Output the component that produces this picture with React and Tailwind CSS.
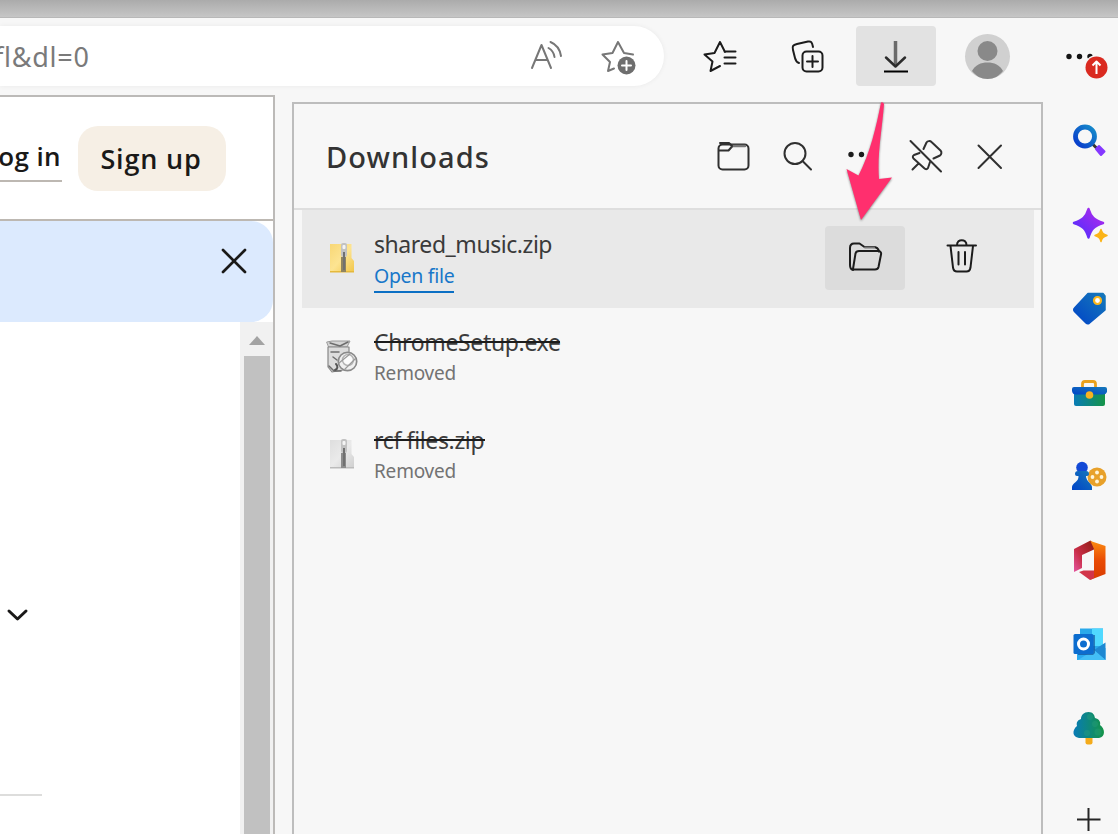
import React from "react";

function Glyph({ box, className = "", children }) {
  const [, , w, h] = box.split(" ");
  return (
    <svg
      width={w}
      height={h}
      viewBox={box}
      fill="none"
      stroke="currentColor"
      strokeWidth="2"
      strokeLinecap="round"
      strokeLinejoin="round"
      className={"block shrink-0 " + className}
    >
      {children}
    </svg>
  );
}

function Toolbar() {
  return (
    <header className="flex h-[77px] shrink-0 items-start pt-2">
      <div className="flex h-[60px] w-[664px] shrink-0 items-center rounded-r-full bg-white text-[#777] shadow-[0_0_5px_rgba(0,0,0,0.06)]">
        <span className="-ml-[6px] w-[534px] whitespace-nowrap pt-[2px] font-['Noto_Sans',sans-serif] text-[27px] leading-[60px] tracking-[0.75px] text-[#7a7a7a]">
          fl&amp;dl=0
        </span>
        <Glyph box="528 36 36 40">
          <path d="M532 68 541.5 45 551 68M535.5 60H547.5M548.500 48C552 50 554 53 554.500 57M550.500 42C556.500 44.500 560 49.500 561 56" />
        </Glyph>
        <Glyph box="600 36 38 40" className="ml-9">
          <path d="M633 54.500 624 53 618 42 612.500 53 602.500 54.500 610 62 608 71 614 68.500" />
          <circle cx="626.500" cy="65.500" r="9" fill="#6e6e6e" stroke="none" />
          <path d="M626.500 61V70M622 65.500H631" stroke="#fff" />
        </Glyph>
      </div>
      <Glyph box="700 36 40 40" className="ml-9 mt-[10px] text-[#1c1c1c]">
        <path d="M725 52 720 42 714.500 53 704.500 54.500 712.500 61.500 710.500 71 720 66M724.500 51.500H735.500M724.500 57.500H735.500M724.500 63.500H735.500" />
      </Glyph>
      <Glyph box="788 36 40 40" className="ml-12 mt-[10px] text-[#1c1c1c]">
        <path d="M799 63 C796 62 795.500 60 795 58L793 50C792 46 793 45 797 44L808 41.500C811 41 812 42 813 47" />
        <rect x="802.500" y="51.500" width="20" height="20" rx="4" />
        <path d="M812.500 56V67M807 61.500H818" />
      </Glyph>
      <button className="ml-7 flex h-[60px] w-20 shrink-0 items-center justify-center rounded bg-[#e2e2e2] text-black">
        <Glyph box="876 36 40 40">
          <path d="M895.500 41V65" stroke="#6b6b6b" strokeWidth="3.500" strokeLinecap="butt" />
          <path d="M886 57.500 895.500 66.500 905 57.500" stroke="#2c2c2c" strokeWidth="2.500" />
          <path d="M884 71.500H908" strokeLinecap="butt" strokeWidth="2" />
        </Glyph>
      </button>
      <Glyph box="964 33 47 47" className="ml-7 mt-[7px]">
        <g stroke="none">
          <circle cx="987.500" cy="56.500" r="22.500" fill="#d0d0d0" />
          <circle cx="987.500" cy="51" r="10" fill="#898989" />
          <path d="M972 71C975 65 981 62.500 987.500 62.500S1000 65 1003 71C999 76 994 79 987.500 79S976 76 972 71Z" fill="#898989" />
        </g>
      </Glyph>
      <Glyph box="1062 45 46 35" className="ml-[51px] mt-[19px]">
        <g stroke="none" fill="#151515">
          <circle cx="1069" cy="56.500" r="2.700" />
          <circle cx="1079.500" cy="56.500" r="2.700" />
          <circle cx="1090" cy="56.500" r="2.700" />
          <circle cx="1096.500" cy="67.500" r="12.500" fill="#f7f7f7" />
          <circle cx="1096.500" cy="67.500" r="11" fill="#da2a20" />
        </g>
        <path d="M1096.500 74V62M1092.500 65.500 1096.500 61.500 1100.500 65.500" stroke="#fff" strokeLinecap="butt" />
      </Glyph>
    </header>
  );
}

function WebPage() {
  return (
    <main className="flex w-[275px] shrink-0 flex-col overflow-hidden border-r-2 border-t-2 border-[#bcbab8] bg-white font-['Open_Sans',sans-serif]">
      <div className="flex h-[124px] shrink-0 items-start border-b-2 border-[#bdb8b2]">
        <div className="mt-[37px] flex h-[48px] w-[62px] justify-end overflow-hidden border-b-2 border-[#bdb8b2]">
          <span className="whitespace-nowrap pr-[1px] text-[26px] font-semibold leading-[44px] tracking-[0.4px] text-[#1a1918]">Log in</span>
        </div>
        <button className="ml-4 mt-[29px] h-[65px] w-[148px] rounded-[20px] bg-[#f6efe5] pr-[2px] text-[27px] font-semibold leading-[62px] tracking-[0.8px] text-[#1a1918]">
          Sign up
        </button>
      </div>
      <div className="flex h-[101px] shrink-0 items-start justify-end rounded-r-[22px] bg-[#dceafe] pr-[23px] pt-6">
        <Glyph box="218 246 32 32" className="text-[#1a1918]">
          <path d="M223 251 245 273M245 251 223 273" strokeWidth="2.700" />
        </Glyph>
      </div>
      <div className="flex flex-1">
        <div className="flex w-60 flex-col bg-white">
          <Glyph box="4 604 28 24" className="ml-1 mt-[282px] text-[#1a1918]">
            <path d="M9 611 17.500 619 26 611" strokeWidth="3" />
          </Glyph>
          <div className="mt-[166px] h-[2px] w-[42px] bg-[#dddddc]" />
        </div>
        <div className="flex w-[33px] flex-col bg-[#f1f1f1] pl-1">
          <Glyph box="244 322 26 34">
            <path d="M249 345H265L257 336Z" fill="#a3a3a3" stroke="none" />
          </Glyph>
          <div className="w-[26px] flex-1 bg-[#c1c1c1]" />
        </div>
      </div>
    </main>
  );
}

function ZipIcon({ muted }) {
  const id = muted ? "zipMuted" : "zipColor";
  return (
    <Glyph box="326 238 34 40">
      <defs>
        <linearGradient id={id} x1="0" y1="0" x2="1" y2="1">
          <stop offset="0" stopColor={muted ? "#dedede" : "#f8d775"} />
          <stop offset="0.5" stopColor={muted ? "#eaeaea" : "#fde492"} />
          <stop offset="1" stopColor={muted ? "#cfcfcf" : "#f1c649"} />
        </linearGradient>
      </defs>
      <g stroke="none">
        <path d="M330 244H351.500V258L354 261V272H330Z" fill={"url(#" + id + ")"} />
        <path d="M330 271H354V272.500H330Z" fill={muted ? "#bbb" : "#e5b93c"} />
        <path d="M341 257H346V272H341Z" fill={muted ? "#8c8c8c" : "#8f8460"} />
        <rect x="341" y="243" width="6" height="14" rx="2" fill="#c2c2c2" />
        <rect x="342.500" y="245" width="3" height="4" rx="1" fill="#f4f4f4" />
        <path d="M343 252H345V270H343Z" fill="#707070" />
      </g>
    </Glyph>
  );
}

function SetupIcon() {
  return (
    <Glyph box="324 336 36 40">
      <path d="M327 342 332 341H350L347 347H329Z" fill="#d5d5d5" stroke="#999" strokeWidth="1" />
      <path d="M328 347H349V367L343 370 332 372 328 367Z" fill="#dcdcdc" stroke="#888" strokeWidth="1.200" />
      <path d="M330 343 340 346 348 342M331 352H339M333 357 337 360M329 366 334 371H341" stroke="#6d6d6d" strokeWidth="1.500" />
      <circle cx="347.500" cy="361.500" r="9.200" fill="#f0f0f0" stroke="#8a8a8a" strokeWidth="1.700" />
      <circle cx="348" cy="360" r="5.500" fill="#fcfcfc" stroke="#b5b5b5" strokeWidth="1.500" />
      <path d="M339 363 350 354M345 369 355 359" stroke="#9a9a9a" strokeWidth="1.200" />
      <path d="M336 364C338 366 338 369 335 370" stroke="#555" />
    </Glyph>
  );
}

function RemovedRow({ icon, name, width }) {
  return (
    <li className="flex h-[98px] shrink-0 pl-6">
      <div className={"w-[48px] shrink-0 " + (name === "ChromeSetup.exe" ? "-ml-[2px] mr-[2px] pt-[28px]" : "pt-[28px]")}>{icon}</div>
      <div className="pt-[17px]">
        <div className={"relative h-[34px] whitespace-nowrap text-[23px] leading-[34px] tracking-[-0.35px] text-[#3c3c3c] " + width}>
          {name}
          <span className="absolute left-0 top-[16px] h-[2px] w-full bg-[#1c1c1c]" />
        </div>
        <div className="text-[19px] leading-[29px] tracking-[-0.2px] text-[#737373]">Removed</div>
      </div>
    </li>
  );
}

function DownloadsPanel() {
  return (
    <section className="ml-[17px] mt-[7px] flex w-[751px] shrink-0 flex-col border-x-2 border-t-2 border-[#bdbdbd] bg-[#f7f7f7] font-['Noto_Sans',sans-serif]">
      <div className="flex h-[106px] shrink-0 items-start border-b-2 border-[#dedede] text-[#303030]">
        <h1 className="ml-8 mt-[31px] w-[388px] whitespace-nowrap text-[29px] font-medium leading-[44px] tracking-[1.1px] text-[#333]">
          Downloads
        </h1>
        <Glyph box="714 136 40 40" className="mt-8">
          <rect x="718.500" y="144.500" width="30" height="25" rx="4" />
          <path d="M719 150.500H728.500L732.500 146" />
          <path d="M732 146H745" stroke="#777" strokeWidth="2.500" />
          <path d="M720 143H729L732 146" />
        </Glyph>
        <Glyph box="778 136 40 40" className="ml-6 mt-8">
          <circle cx="795" cy="153.500" r="10.500" />
          <path d="M802.500 161 811 169.500" />
        </Glyph>
        <Glyph box="842 136 40 40" className="ml-6 mt-8">
          <g fill="#1c1c1c" stroke="none">
            <circle cx="851" cy="154.500" r="2.700" />
            <circle cx="861.500" cy="154.500" r="2.700" />
            <circle cx="872" cy="154.500" r="2.700" />
          </g>
        </Glyph>
        <Glyph box="906 136 40 40" className="ml-6 mt-8">
          <path d="M910.500 141 941 171.500" />
          <path d="M923.500 149 926.500 142.500C927.500 141 930 140.500 931.500 142L940.500 150.500C942 152 941.500 154.500 940 155.500L933.500 158.500" />
          <path d="M919.500 153 914 155C912.500 156 912.500 157 913.500 158.500L924 168C925.500 169.500 927 169.500 928 168L930 162M918.500 163.500 912.500 169.500" />
        </Glyph>
        <Glyph box="970 136 40 40" className="ml-6 mt-8">
          <path d="M978.500 145.500 1001 168M1001 145.500 978.500 168" />
        </Glyph>
      </div>
      <ul className="flex flex-1 flex-col pl-2">
        <li className="flex h-[98px] w-[732px] shrink-0 items-start bg-[#e9e9e9] pl-6">
          <div className="w-[48px] shrink-0 pt-[28px]"><ZipIcon /></div>
          <div className="w-[451px] pt-[17px]">
            <div className="h-[34px] whitespace-nowrap text-[23px] leading-[34px] tracking-[-0.45px] text-[#3a3a3a]">shared_music.zip</div>
            <a className="inline-block h-[32px] w-[80px] whitespace-nowrap border-b-2 border-[#0b6fc4] text-[19.5px] leading-[29px] tracking-[-0.3px] text-[#1877c9]">
              Open file
            </a>
          </div>
          <button className="mt-4 flex h-16 w-20 shrink-0 items-center justify-center rounded bg-[#dcdcdc] text-[#1c1c1c]">
            <Glyph box="845 238 40 40">
              <path d="M853 270C850.500 269.500 850 268 850 265V248C850 244.500 851.500 243.500 854 243.500H859.500L864.500 247H873C877 247 878.500 248.500 879 251.500" />
              <path d="M853 269 855.500 253.500C856 251.500 857 251 859 251H878C880.500 251 881.500 252.500 881 254.500L878.500 267C878 269 877 269.500 875 269.500H853.500" />
              <path d="M865 247.500H874" stroke="#777" />
            </Glyph>
          </button>
          <Glyph box="942 238 40 40" className="ml-[37px] mt-7 text-[#1c1c1c]">
            <path d="M947.500 245.500H976M957 245C957 238.500 966.500 238.500 966.500 245M950.500 246 953 267.500C953.500 270.500 954.500 271.500 957 271.500H966.500C969 271.500 970 270.500 970.500 267.500L973 246M958.500 252V264.500M965 252V264.500" />
          </Glyph>
        </li>
        <RemovedRow icon={<SetupIcon />} name="ChromeSetup.exe" width="w-[186px]" />
        <RemovedRow icon={<ZipIcon muted />} name="rcf files.zip" width="w-[111px]" />
      </ul>
    </section>
  );
}

function Sidebar() {
  return (
    <aside className="flex w-[75px] shrink-0 flex-col items-center gap-11 pl-[17px] pt-[25px]">
      <Glyph box="1069 120 40 40">
        <defs>
          <linearGradient id="ring" x1="0" y1="1" x2="1" y2="0">
            <stop offset="0" stopColor="#0838cc" /><stop offset="1" stopColor="#168dca" />
          </linearGradient>
          <linearGradient id="violet" x1="0" y1="1" x2="1" y2="0">
            <stop offset="0" stopColor="#4c2eff" /><stop offset="1" stopColor="#b52bea" />
          </linearGradient>
          <linearGradient id="blue" x1="0" y1="1" x2="1" y2="0">
            <stop offset="0" stopColor="#0044c8" /><stop offset="1" stopColor="#1679b9" />
          </linearGradient>
          <linearGradient id="green" x1="0" y1="0" x2="1" y2="0">
            <stop offset="0" stopColor="#087bb6" /><stop offset="1" stopColor="#159447" />
          </linearGradient>
        </defs>
        <path d="M1092 143.500 1096 147.500" stroke="#333" strokeWidth="3" />
        <path d="M1096 149 1099 146 1104.500 151.500 1101 155Z" fill="#8538ff" stroke="#8538ff" />
        <circle cx="1085" cy="136.500" r="9.500" stroke="url(#ring)" strokeWidth="4.800" />
      </Glyph>
      <Glyph box="1069 204 40 40">
        <g strokeWidth="1.500">
          <path d="M1088.500 209C1091 217 1094 220 1103 223C1094 226 1091 229 1088.500 237.500C1086 229 1083 226 1074 223C1083 220 1086 217 1088.500 209Z" fill="url(#violet)" stroke="url(#violet)" strokeWidth="2.500" />
          <path d="M1101 229.500C1102 233 1103 234 1107 235.500C1103 237 1102 238 1101 241.500C1100 238 1099 237 1095 235.500C1099 234 1100 233 1101 229.500Z" fill="#fbb418" stroke="#fbb418" />
        </g>
      </Glyph>
      <Glyph box="1069 288 40 40">
        <path d="M1088 293.500H1103L1105 296V310L1089 323.500C1088 324 1087 324 1086 323L1074.500 311.500C1073.500 310.500 1073.500 309 1074.500 308Z" fill="url(#blue)" stroke="url(#blue)" strokeWidth="1.500" />
        <circle cx="1097.500" cy="300.500" r="3.500" fill="#fff" stroke="#fbb61c" strokeWidth="2.200" />
      </Glyph>
      <Glyph box="1069 372 40 40">
        <path d="M1082.500 388V384Q1082.500 381.500 1085 381.500H1093Q1095.500 381.500 1095.500 384V388" stroke="#e9a11d" strokeWidth="2.800" />
        <rect x="1074" y="392" width="31" height="14" rx="2" fill="url(#green)" stroke="none" />
        <path d="M1074 387H1105Q1107 387 1107 389V392Q1106 394.500 1103 394.500H1076Q1072.500 394.500 1072 391V389Q1072 387 1074 387Z" fill="url(#blue)" stroke="none" />
        <circle cx="1089.500" cy="395" r="3.800" fill="#f6b221" stroke="none" />
      </Glyph>
      <Glyph box="1069 456 40 40">
        <g stroke="none">
          <circle cx="1097" cy="477" r="9.500" fill="#e8a12a" />
          <circle cx="1082" cy="467.500" r="5.800" fill="#1249d6" />
          <path d="M1075 474Q1075 471 1078 471H1086Q1089 471 1089 474Q1089 476 1086 476C1086 481 1092 484 1092 487V490H1072V487C1072 483 1079 482 1078.500 476H1077Q1075 476 1075 474Z" fill="url(#blue)" />
          <g fill="#fff5da">
            <circle cx="1097" cy="472.500" r="1.900" /><circle cx="1092.500" cy="477" r="1.900" /><circle cx="1101.500" cy="477" r="1.900" /><circle cx="1097" cy="481.500" r="1.900" />
          </g>
        </g>
      </Glyph>
      <Glyph box="1069 540 40 40">
        <defs>
          <linearGradient id="redFade" x1="0" y1="1" x2="1" y2="0">
            <stop offset="0" stopColor="#e456a0" /><stop offset="0.400" stopColor="#c92e48" /><stop offset="1" stopColor="#8e1c12" />
          </linearGradient>
          <linearGradient id="orangeFade" x1="0" y1="0" x2="0" y2="1">
            <stop offset="0" stopColor="#fb8b13" /><stop offset="0.500" stopColor="#e94b04" /><stop offset="1" stopColor="#d83b01" />
          </linearGradient>
        </defs>
        <g stroke="none">
          <path d="M1074 549 1090.500 540.500 1094 544V549.500L1082 555V568L1074 572Z" fill="url(#redFade)" />
          <path d="M1090.500 541 1105.500 546V574L1090 580 1094 572V549Z" fill="url(#orangeFade)" />
          <path d="M1079 572 1083.500 570.500H1094V578L1090 580Z" fill="#d23549" />
        </g>
      </Glyph>
      <Glyph box="1069 624 40 40">
        <g stroke="none">
          <path d="M1080 628.500H1103V650H1080Z" fill="#29a9ea" />
          <path d="M1092 628.500H1103V646H1092Z" fill="#50d9ff" />
          <path d="M1077 648H1105.500V660H1077Z" fill="#2ba9f0" />
          <path d="M1094 650 1105.500 642.500V660Z" fill="#1e88d2" />
          <path d="M1078 660 1094 650 1105.500 660Z" fill="#43bff6" />
          <path d="M1078 635H1095V653L1093 655H1078Z" fill="#0e4389" opacity="0.600" />
          <rect x="1073.500" y="634" width="20" height="20" rx="1.500" fill="#0c6dcf" />
        </g>
        <circle cx="1083.500" cy="644" r="5" stroke="#fff" strokeWidth="3" />
      </Glyph>
      <Glyph box="1069 708 40 40">
        <g stroke="none">
          <rect x="1085.500" y="735" width="7" height="9.500" rx="2" fill="#f4ab1b" />
          <path d="M1088.500 712C1093 712 1094.500 715 1095 718C1099 719 1101 722 1100 725C1105 728 1106 737 1099 738H1079C1072 737 1072 730 1077 726C1076 722 1078 720 1081 719C1081 715 1084 712 1088.500 712Z" fill="url(#green)" />
          <g fill="#2fa580" opacity="0.300"><circle cx="1090" cy="717" r="3" /><circle cx="1095" cy="724" r="3" /><circle cx="1098" cy="732" r="3.500" /><circle cx="1087" cy="733" r="3" /></g>
        </g>
      </Glyph>
      <Glyph box="1069 792 40 42" className="text-[#262626]">
        <path d="M1088.500 808V831M1077 819.500H1100.500" strokeLinecap="butt" />
      </Glyph>
    </aside>
  );
}

export default function App() {
  return (
    <div className="relative flex h-[834px] w-[1118px] flex-col overflow-hidden bg-[#f7f7f7]">
      <div className="h-[18px] shrink-0 border-b border-[#b8b8b8] bg-linear-to-b from-[#ababab] to-[#c6c6c6]" />
      <Toolbar />
      <div className="flex h-[739px] shrink-0 items-stretch">
        <WebPage />
        <DownloadsPanel />
        <Sidebar />
      </div>
      <svg
        width="60"
        height="132"
        viewBox="840 95 60 132"
        className="pointer-events-none absolute left-[840px] top-[95px] drop-shadow-[0_1px_1px_rgba(0,0,0,0.45)]"
      >
        <path d="M881 102.500Q883 101.500 884 104C882 130 877 155 879 179L892 177.500 861 220 846.500 169 858.500 175.500C870 153 876 128 881 102.500Z" fill="#ff2f6e" />
      </svg>
    </div>
  );
}
